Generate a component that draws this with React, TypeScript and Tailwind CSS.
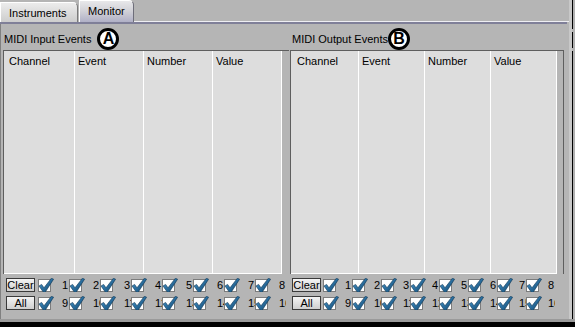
import React from "react";

function Check() {
  return (
    <svg width="16" height="15" viewBox="0 0 16 15" className="block shrink-0">
      <defs>
        <linearGradient id="cg" x1="0" y1="0" x2="1" y2="1">
          <stop offset="0" stopColor="#4f9fd4" />
          <stop offset="0.5" stopColor="#2a6e9e" />
          <stop offset="1" stopColor="#123f60" />
        </linearGradient>
      </defs>
      <rect x="0.5" y="1.5" width="12" height="12" fill="#ffffff" stroke="#7c7c7c" />
      <path
        d="M1,8 L3.6,6.4 L6,9.8 L13.4,0.2 L15.6,1.2 L7.1,14.4 L5.5,14.4 Z"
        fill="url(#cg)"
        stroke="#0f3654"
        strokeWidth="0.6"
        strokeLinejoin="round"
      />
    </svg>
  );
}

function Item({ n, w, gap }: { n: number; w: string; gap: string }) {
  return (
    <div className={`flex h-[14px] shrink-0 items-center overflow-hidden ${w}`}>
      <Check />
      <span className={`whitespace-nowrap leading-[13px] ${gap}`}>{n}</span>
    </div>
  );
}

function Btn({ label }: { label: string }) {
  return (
    <div className="flex h-[14px] w-[29px] shrink-0 items-center justify-center border border-[#3a3a3a] bg-linear-to-b from-[#f4f4f4] to-[#cfcfcf] leading-none">
      {label}
    </div>
  );
}

function Col({ w, pl, children }: { w: string; pl: string; children: React.ReactNode }) {
  return (
    <div className={`h-full shrink-0 border-r border-white bg-[#dddddd] pt-[4px] leading-[13px] ${w} ${pl}`}>
      {children}
    </div>
  );
}

function Circle({ letter }: { letter: string }) {
  return (
    <div className="flex h-[22px] w-[22px] shrink-0 items-center justify-center rounded-full border-[3px] border-black bg-white text-[16px] font-bold leading-none">
      {letter}
    </div>
  );
}

export default function App() {
  const row1 = [1, 2, 3, 4, 5, 6, 7, 8];
  const row2 = [9, 10, 11, 12, 13, 14, 15, 16];
  return (
    <div className="flex h-[327px] w-[575px] flex-col overflow-hidden bg-[#b5b5b5] font-['Liberation_Sans',Arial,sans-serif] text-[11px] text-black">
      <div className="flex h-[319px]">
        <div className="flex w-[569px] flex-col">
          {/* tabs */}
          <div className="flex h-[22px] items-end">
            <div className="flex h-[20px] w-[78px] items-center rounded-tr-[5px] border-t border-l border-r border-t-white border-l-white border-r-[#7a7a7a] bg-linear-to-b from-[#ececec] to-[#cdcdcd] pl-[8px] pt-[1px]">
              Instruments
            </div>
            <div className="ml-[1px] flex h-[22px] w-[55px] items-center rounded-tr-[5px] border-t border-l border-r border-t-white border-l-white border-r-[#6e6e7a] bg-linear-to-b from-[#e8e8ea] via-[#d0d0d6] to-[#b0b0c6] pl-[8px]">
              Monitor
            </div>
            <div className="h-[22px] flex-1 border-b border-[#eeeef2]"></div>
          </div>
          <div className="h-[2px] w-[567px] bg-[#7f7f98]"></div>

          {/* panel */}
          <div className="flex h-[295px] border-l border-[#808080]">
            {/* left column */}
            <div className="flex w-[288px] shrink-0 flex-col">
              <div className="flex h-[26px] items-center pl-[3px] pt-[4px]">
                <span className="leading-[13px]">MIDI Input Events</span>
                <div className="ml-[6px]">
                  <Circle letter="A" />
                </div>
              </div>
              <div className="ml-[2px] flex h-[224px] w-[286px] border-l border-t border-[#5e5e5e]">
                <div className="flex h-full w-[278px] border-b border-white">
                  <Col w="w-[71px]" pl="pl-[5px]">Channel</Col>
                  <Col w="w-[69px]" pl="pl-[3px]">Event</Col>
                  <Col w="w-[69px]" pl="pl-[3px]">Number</Col>
                  <Col w="w-[69px]" pl="pl-[3px]">Value</Col>
                </div>
                <div className="w-[7px]"></div>
              </div>
              <div className="flex flex-col gap-[4px] pl-[5px] pt-[4px]">
                <div className="flex h-[14px] items-center">
                  <Btn label="Clear" />
                  <div className="ml-[3px] flex">
                    {row1.map((n) => (
                      <Item key={n} n={n} w="w-[31px]" gap="ml-[8px]" />
                    ))}
                  </div>
                </div>
                <div className="flex h-[14px] items-center">
                  <Btn label="All" />
                  <div className="ml-[3px] flex">
                    {row2.map((n) => (
                      <Item key={n} n={n} w="w-[31px]" gap="ml-[8px]" />
                    ))}
                  </div>
                </div>
              </div>
            </div>

            {/* right column */}
            <div className="flex w-[280px] shrink-0 flex-col">
              <div className="flex h-[26px] items-center pl-[3px] pt-[4px]">
                <span className="leading-[13px]">MIDI Output Events</span>
                <Circle letter="B" />
              </div>
              <div className="ml-[1px] flex h-[224px] w-[274px] border-l border-t border-r border-[#5e5e5e]">
                <div className="flex h-full w-[266px] border-b border-white">
                  <Col w="w-[68px]" pl="pl-[6px]">Channel</Col>
                  <Col w="w-[66px]" pl="pl-[3px]">Event</Col>
                  <Col w="w-[66px]" pl="pl-[3px]">Number</Col>
                  <Col w="w-[66px]" pl="pl-[3px]">Value</Col>
                </div>
                <div className="w-[6px]"></div>
              </div>
              <div className="flex flex-col gap-[4px] pl-[3px] pt-[4px]">
                <div className="flex h-[14px] items-center">
                  <Btn label="Clear" />
                  <div className="ml-[2px] flex">
                    {row1.map((n) => (
                      <Item key={n} n={n} w="w-[29px]" gap="ml-[6px]" />
                    ))}
                  </div>
                </div>
                <div className="flex h-[14px] items-center">
                  <Btn label="All" />
                  <div className="ml-[2px] flex">
                    {row2.map((n) => (
                      <Item key={n} n={n} w="w-[29px]" gap="ml-[6px]" />
                    ))}
                  </div>
                </div>
              </div>
            </div>
          </div>
        </div>

        {/* right edge strip */}
        <div className="w-[3px] bg-[#c8c8c8]"></div>
        <div className="flex w-[1px] flex-col">
          <div className="h-[29px] bg-black"></div>
          <div className="h-[3px]"></div>
          <div className="h-[16px] bg-black"></div>
          <div className="h-[3px]"></div>
          <div className="flex-1 bg-black"></div>
        </div>
        <div className="w-[2px] bg-[#b0b0b0]"></div>
      </div>
      <div className="h-[3px] bg-[#9a9a9a]"></div>
      <div className="h-[5px] bg-black"></div>
    </div>
  );
}
